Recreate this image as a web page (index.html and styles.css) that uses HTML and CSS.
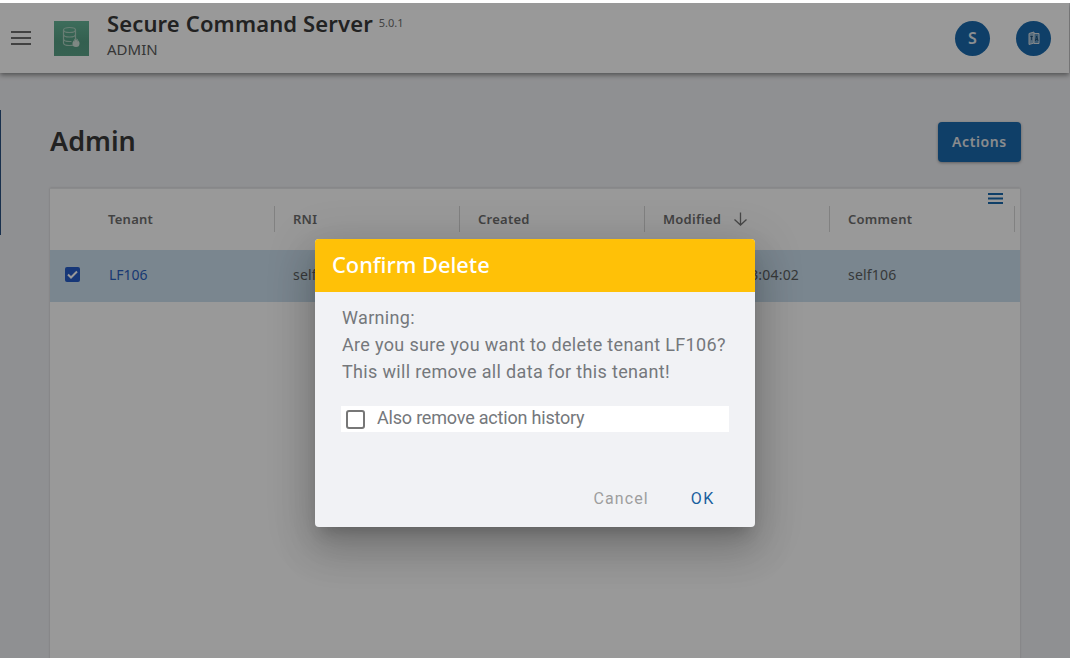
FILE: index.html
```html
<!DOCTYPE html>
<html lang="en">
<head>
<meta charset="utf-8">
<title>Secure Command Server</title>
<link rel="stylesheet" href="styles.css">
</head>
<body>
<div class="strip"></div>
<div class="app">
  <header class="topbar">
    <svg class="burger" width="20" height="14" viewBox="0 0 20 14"><path d="M0 1h20M0 7h20M0 13h20" stroke="#6e6e6e" stroke-width="2"/></svg>
    <div class="logo">
      <svg width="35" height="35" viewBox="0 0 35 35" fill="none" stroke="#add0c0" stroke-width="1.2">
        <path d="M9.500 9c0-1.500 2.500-2.500 6-2.500s6 1 6 2.500v13c0 1.500-2.500 2.500-6 2.500s-6-1-6-2.500z"/>
        <path d="M9.500 9c0 1.500 2.500 2.500 6 2.500s6-1 6-2.500M9.500 13.500c0 1.500 2.500 2.500 6 2.500s6-1 6-2.500M9.500 18c0 1.500 2.500 2.500 6 2.500h2"/>
        <circle cx="22" cy="22.500" r="3.500" fill="#d3e3db" stroke="none"/>
        <path d="M20.300 20.500v-.8a1.700 1.700 0 0 1 3.400 0v.8"/>
      </svg>
    </div>
    <div class="brand">
      <div class="brand-title">Secure Command Server <span class="version">5.0.1</span></div>
      <div class="brand-sub">ADMIN</div>
    </div>
    <div class="avatars">
      <div class="avatar">S</div>
      <div class="avatar">
        <svg width="16" height="16" viewBox="0 0 16 16" fill="none" stroke="#dbe2e7" stroke-width="1">
          <path d="M3 3.500l5-1.500v11l-5 1.500z" fill="#dbe2e7" fill-opacity=".6"/>
          <path d="M8 3.500h5v10H8" fill="#dbe2e7" fill-opacity=".35"/>
          <path d="M4.300 6.500h2.600M5.600 5.800v4.400M9.300 11l1.400-5 1.400 5M9.800 9.500h1.800" stroke="#17476f" stroke-width=".8"/>
        </svg>
      </div>
    </div>
  </header>
  <main class="content">
    <div class="title-row">
      <h1 class="page-title">Admin</h1>
      <button class="actions">Actions</button>
    </div>
    <section class="card">
      <svg class="table-menu" width="15" height="11" viewBox="0 0 15 11"><path d="M0 1h15M0 5.500h15M0 10h15" stroke="#1a6aad" stroke-width="2"/></svg>
      <div class="row head">
        <div class="cell check"></div>
        <div class="cell">Tenant</div>
        <div class="cell">RNI</div>
        <div class="cell">Created</div>
        <div class="cell">Modified
          <svg class="sort" width="15" height="14" viewBox="0 0 15 14" fill="none" stroke="#777" stroke-width="1.300"><path d="M7.500 0.500v12.500M1.500 7.500L7.500 13l6-5.500"/></svg>
        </div>
        <div class="cell">Comment</div>
      </div>
      <div class="row selected">
        <div class="cell check">
          <span class="tick"><svg width="15" height="15" viewBox="0 0 15 15" fill="none" stroke="#fff" stroke-width="2"><path d="M3 7.500l3 3 6-6"/></svg></span>
        </div>
        <div class="cell link">LF106</div>
        <div class="cell">self106</div>
        <div class="cell"></div>
        <div class="cell">2023-01-12 13:04:02</div>
        <div class="cell">self106</div>
      </div>
    </section>
  </main>
  <div class="edge"></div>
  <div class="overlay">
    <div class="dialog">
      <div class="dialog-head">Confirm Delete</div>
      <div class="dialog-body">
        <p class="msg">Warning:<br>Are you sure you want to delete tenant LF106?<br>This will remove all data for this tenant!</p>
        <label class="opt"><span class="box"></span><span class="opt-text">Also remove action history</span></label>
      </div>
      <div class="dialog-foot">
        <span class="btn cancel">Cancel</span>
        <span class="btn ok">OK</span>
      </div>
    </div>
  </div>
</div>
</body>
</html>
```
FILE: styles.css
```css
* { box-sizing: border-box; }
html, body { margin: 0; height: 100%; overflow: hidden; background: #fff; }
body { font-family: "Noto Sans", "Open Sans", sans-serif; color: #3a3a3a; }

.strip { height: 3px; background: #fff; }
.app { position: relative; height: 655px; overflow: hidden; background: #eff0f3; }

.topbar { height: 70px; margin-right: 1px; display: flex; align-items: center; background: #fff; box-shadow: 0 2px 5px rgba(0,0,0,.45); padding: 0 18px 0 11px; position: relative; }
.burger { flex: none; margin-top: -1px; }
.logo { width: 35px; height: 35px; margin-left: 23px; flex: none; background: linear-gradient(#66b698, #569f84 60%, #5ca389); }
.brand { margin-left: 18px; flex: 1; margin-top: -8px; }
.brand-title { font-size: 22px; font-weight: 600; line-height: 30px; letter-spacing: .14px; color: #3a3a3a; }
.version { font-size: 11px; font-weight: 400; letter-spacing: 0; color: #6e6e6e; vertical-align: 5px; }
.brand-sub { font-size: 15px; line-height: 22px; color: #5a5a5a; }
.avatars { display: flex; gap: 26px; }
.avatar { width: 35px; height: 35px; border-radius: 50%; background: #1a6aad; color: #e8edf2; display: flex; align-items: center; justify-content: center; font-size: 16px; font-weight: 600; }

.content { padding: 0 49px 0 50px; }
.title-row { display: flex; justify-content: space-between; align-items: center; height: 89px; padding-top: 49px; margin-bottom: 26px; }
.page-title { margin: -2px 0 0; font-size: 27px; font-weight: 600; line-height: 36px; color: #3a3a3a; }
.actions { width: 83px; height: 40px; padding: 0 0 2px; border: 0; border-radius: 4px; background: #1a6aad; color: #e4e8ec; font-family: inherit; font-size: 14px; font-weight: 600; letter-spacing: .6px; box-shadow: 0 1px 3px rgba(0,0,0,.35); }

.card { position: relative; height: 600px; width: 970px; background: #fff; border-top: 1px solid #e6e8ea; box-shadow: 0 0 2px rgba(0,0,0,.18); }
.table-menu { position: absolute; top: 4px; right: 17px; }
.row { display: grid; grid-template-columns: 40px repeat(5, 185px); align-items: center; font-size: 14px; letter-spacing: .2px; }
.head { height: 60px; font-weight: 600; font-size: 13px; letter-spacing: .25px; color: #6f6f6f; margin-bottom: 1px; }
.head .cell:not(.check) { border-right: 1px solid #d8d8d8; height: 26px; line-height: 26px; }
.cell { padding-left: 18px; white-space: nowrap; }
.cell.check { padding-left: 15px; }
.sort { margin-left: 8px; vertical-align: -2px; }
.selected { height: 52px; background: #cbdfee; color: #5c5f62; padding-bottom: 3px; }
.selected .link { color: #2b5fc0; padding-left: 19px; letter-spacing: 0; }
.tick { display: block; width: 15px; height: 15px; border-radius: 2px; background: #255dc8; }
.tick svg { display: block; }

.edge { position: absolute; left: 0; top: 107px; width: 1px; height: 125px; background: #2a5080; }

.overlay { position: absolute; inset: 0; background: rgba(0,0,0,.4); display: flex; justify-content: center; align-items: flex-start; padding-top: 236px; }
.dialog { width: 440px; height: 288px; display: flex; flex-direction: column; background: #f1f2f5; border-radius: 4px; overflow: hidden; box-shadow: 0 11px 15px -7px rgba(0,0,0,.2), 0 24px 38px 3px rgba(0,0,0,.14), 0 9px 46px 8px rgba(0,0,0,.12); }
.dialog-head { flex: none; height: 53px; padding-left: 17px; background: #ffc107; color: #fff; font-size: 21.8px; font-weight: 500; line-height: 52px; }
.dialog-body { flex: 1; padding: 12px 26px 0; font-family: Roboto, sans-serif; font-size: 18px; color: #75787c; }
.msg { margin: 0 0 21px 1px; line-height: 27px; letter-spacing: .34px; white-space: nowrap; }
.opt { display: flex; align-items: center; height: 26px; background: #fff; padding-left: 5px; letter-spacing: -.2px; }
.opt-text { margin-top: -3px; }
.box { width: 19px; height: 19px; margin-right: 12px; border: 2px solid #777; border-radius: 3px; }
.dialog-foot { flex: none; height: 58px; display: flex; justify-content: flex-end; align-items: center; gap: 42px; padding-right: 40px; font-family: Roboto, sans-serif; font-size: 16px; letter-spacing: 1.6px; }
.cancel { color: #9e9e9e; letter-spacing: 1.1px; }
.ok { color: #1a5f9e; }
```
